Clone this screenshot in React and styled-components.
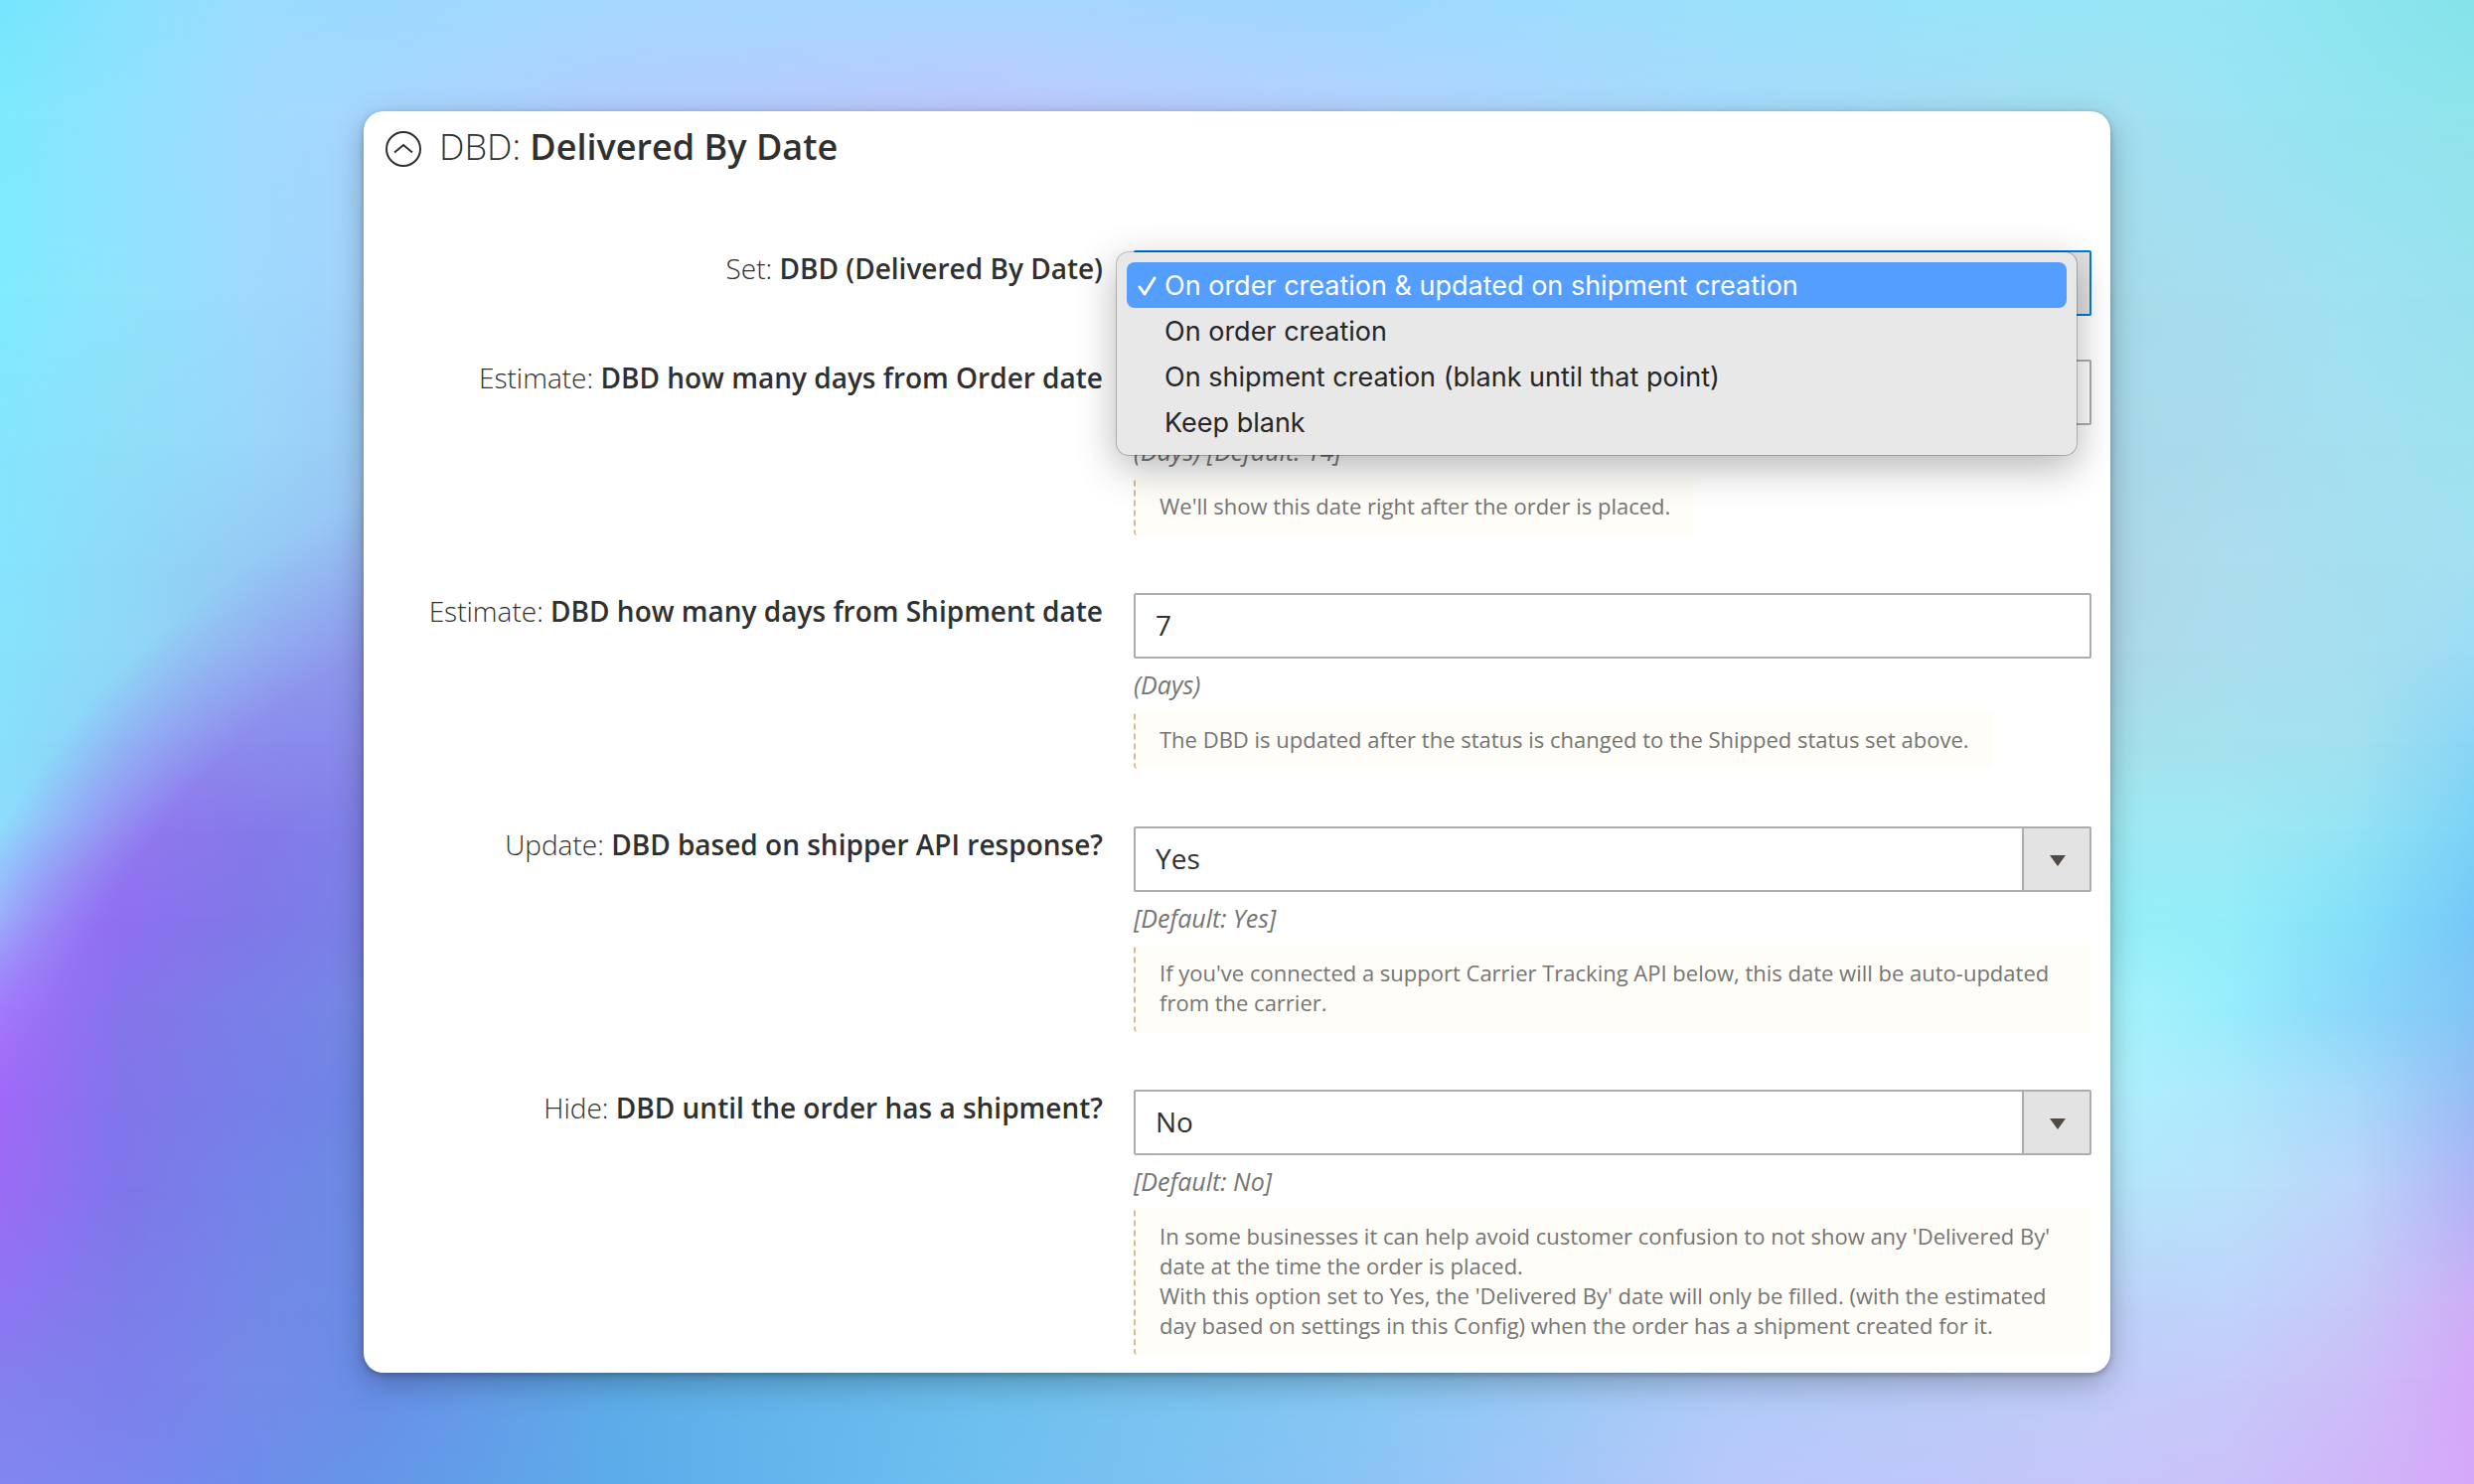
import React from "react";
import styled, { createGlobalStyle, css } from "styled-components";

const GlobalStyle = createGlobalStyle`
  *, *::before, *::after { box-sizing: border-box; }
  body {
    margin: 0;
    font-family: "Open Sans", "Noto Sans", sans-serif;
    color: #303030;
  }
`;

/* Colour meshes behind the card: each row is a horizontal gradient that fades
   in over the row above it, so neighbouring stops blend in both directions. */
const parseRows = (rows) => rows.map(([at, colours]) => ({ at, colours: colours.split(" ") }));

const skyColumns = [0, 5, 10, 15, 25, 40, 55, 70, 85, 90, 95, 100];
const skyRows = parseRows([
  [0, "75e6fd 8ae3ff 9bdcff 9cdafe a6d8ff a8d6ff 9fd8ff 9be1fb 98e6f8 95e6f6 8de5f0 84e4ea"],
  [8, "7eeafd 90e2fd a0dafd a8d7ff b2cdff bfc8fd b4d2ff a6dafc a4dff0 9be3f4 93e4f0 90e5ea"],
  [20, "80ebfd 90e3fc 9edafd a4d2fb b2cdff bfc8fd b4d2ff a6dafc a7dbea a6ddee 9fe2f2 99e1ee"],
  [30, "84e6fd 90dff9 99d7fa 9bcaf5 9bcaf5 9bcaf5 a9d8ea a9d8ea a9d8ea a8dbec a4e0f0 9fe2ee"],
  [38, "85e5fd 8fd9f7 94cbf5 98c0f3 98c0f3 98c0f3 aed6e8 aed6e8 aed6e8 adddee a6dfee a2e1f2"],
  [44, "86e3fb 90d7f7 94c6f2 93b8f0 93b8f0 93b8f0 add8ea add8ea add8ea abddee a6dfee 9cdcf5"],
  [50, "88e0fb 8fd0f7 94c4f2 94b6f0 94b6f0 94b6f0 a6e0ec a6e0ec a6e0ec a5e1ee a3e1ee 8ad6f6"],
  [56, "8edcfd 8fccf7 94c0f2 94b6f0 94b6f0 94b6f0 9eeaf4 9eeaf4 9eeaf4 9eeaf4 94e4f5 7bd3f5"],
  [62, "96c8fc 8e90f0 7f78e8 7a82e6 7a82e6 7a82e6 96eef8 96eef8 96eef8 94eefa 84e0f8 76c8f8"],
  [68, "a088fb 8574ea 7a7fe8 7389e5 7389e5 7389e5 a8f4fb a8f4fb a8f4fb 98edfc 8bd8fa 82c6f6"],
  [74, "a069f8 8175ea 767fe8 6d87e4 6d87e4 6d87e4 b0f0fd b0f0fd b0f0fd aee8fc a8dafa 98bdf4"],
  [80, "9b6cf5 7f76ea 7484e8 6b8ce4 6b8ce4 6b8ce4 b4e6fb b4e6fb b4e6fb b8e2fb bcd6fa b0b4f5"],
  [88, "8e76f2 7d7dea 7488e8 6a8ee6 5eade8 6dc0ee 86c8f4 a8ccf8 bcd2f8 bfd4fb c6c8f8 cfaef6"],
  [93, "8480ee 7d80ec 758ae8 6a8ee8 5eade8 6dc0ee 86c8f4 b0ccf8 c2ccf9 c5cafa ccbff8 d5a8f8"],
  [100, "8286f0 7a86ee 6e8ceb 6596e6 5cacea 6fc0f0 8ac4f5 b8c8fa c6c6fa cac2fa cfb6f8 d6a8f8"],
]);

const duskColumns = [0, 5, 10, 15, 25, 40, 55, 70];
const duskRows = parseRows([
  [38, "9fa0f6 94a0f2 94a4f0 8f9fec 8f9fec 8f9fec 8f9fec 8f9fec"],
  [44, "9fa0f6 9496f2 909cee 8c98ec 8c98ec 8c98ec 8c98ec 8c98ec"],
  [50, "a488f8 9488f0 8c8cec 888aea 888aea 888aea 888aea 888aea"],
  [56, "a480f8 9478f0 8579ea 7f82e8 7f82e8 7f82e8 7f82e8 7f82e8"],
  [62, "a475fa 8e70f0 7f78e8 7a82e6 7a82e6 7a82e6 7a82e6 7a82e6"],
  [68, "a46ffa 8574ea 7a7fe8 7389e5 7389e5 7389e5 7389e5 7389e5"],
  [74, "a069f8 8175ea 767fe8 6d87e4 6d87e4 6d87e4 6d87e4 6d87e4"],
  [80, "9b6cf5 7f76ea 7484e8 6b8ce4 6b8ce4 6b8ce4 6b8ce4 6b8ce4"],
  [88, "8e76f2 7d7dea 7488e8 6a8ee6 5eade8 6dc0ee 86c8f4 a8ccf8"],
  [93, "8480ee 7d80ec 758ae8 6a8ee8 5eade8 6dc0ee 86c8f4 b0ccf8"],
  [100, "8286f0 7a86ee 6e8ceb 6596e6 5cacea 6fc0f0 8ac4f5 b8c8fa"],
]);

const Page = styled.div`
  display: grid;
  min-height: 100vh;
`;

const MeshLayer = styled.div`
  grid-area: 1 / 1;
  display: grid;
  ${({ $mask }) =>
    $mask &&
    css`
      mask-image: ${$mask};
    `}
`;

const MeshRow = styled.div`
  grid-area: 1 / 1;
  background: linear-gradient(
    to right,
    ${({ $colours, $columns }) => $colours.map((c, i) => `#${c} ${$columns[i]}%`).join(", ")}
  );
  ${({ $from, $to }) =>
    $to > $from &&
    css`
      mask-image: linear-gradient(to bottom, transparent ${$from}%, #000 ${$to}%);
    `}
`;

const Content = styled.main`
  grid-area: 1 / 1;
  z-index: 1;
  padding: 112px 32px;
`;

const Card = styled.section`
  max-width: 1758px;
  margin: 0 auto;
  padding: 12px 19px 18px 21px;
  background: #fff;
  border-radius: 20px;
  box-shadow: 0 10px 32px rgba(0, 0, 0, 0.26), 0 2px 6px rgba(0, 0, 0, 0.24);
`;

const SectionHeader = styled.h2`
  margin: 0 0 80px;
  font-size: 36px;
  line-height: 48px;
  font-weight: 300;
`;

const SectionToggle = styled.button`
  display: flex;
  align-items: center;
  gap: 17px;
  padding: 0;
  border: 0;
  background: none;
  color: inherit;
  font: inherit;
  text-align: left;
  cursor: pointer;
`;

const ToggleIcon = styled.svg`
  flex: none;
  width: 38px;
  height: 38px;
  margin-top: 4px;
  fill: none;
  stroke: #303030;
  stroke-width: 2;
`;

const Strong = styled.span`
  font-weight: 600;
`;

const Fields = styled.div`
  display: grid;
`;

const Field = styled.div`
  display: grid;
  grid-template-columns: 3fr 4fr;
  column-gap: 31px;
  margin-bottom: ${({ $gap }) => $gap}px;
`;

const Label = styled.label`
  font-size: 28px;
  line-height: 36px;
  font-weight: 300;
  text-align: right;
`;

const Control = styled.div`
  position: relative;
`;

const boxStyle = css`
  display: block;
  width: 100%;
  height: 66px;
  margin: 0;
  padding: 0 20px 2px;
  border: 2px solid ${({ $active }) => ($active ? "#007bdb" : "#adadad")};
  border-radius: 2px;
  outline: 0;
  background: #fff;
  color: #303030;
  font-family: inherit;
  font-size: 28px;
  line-height: 38px;
`;

const TextInput = styled.input`
  ${boxStyle}
`;

const SelectBox = styled.select`
  ${boxStyle}
  appearance: none;
  padding-right: 90px;
  background: linear-gradient(to right, #adadad 2px, #e3e3e3 2px) right / 68px 100% no-repeat #fff;
`;

const SelectArrow = styled.svg`
  position: absolute;
  top: 29px;
  right: 26px;
  width: 16px;
  height: 11px;
  fill: #514943;
  pointer-events: none;
`;

const Hint = styled.p`
  margin: 9px 0 10px;
  font-size: 25px;
  line-height: 34px;
  font-style: italic;
  color: #757575;
`;

const Note = styled.p`
  width: fit-content;
  margin: 0;
  padding: 13px 24px 15px;
  border-left: 2px dashed #d6bf86;
  border-radius: 4px;
  background: #fffdf7;
  font-size: 22px;
  line-height: 30px;
  color: #757575;
`;

const Menu = styled.ul`
  position: absolute;
  z-index: 2;
  top: 2px;
  left: -17px;
  right: 15px;
  margin: 0;
  padding: 10px;
  list-style: none;
  border-radius: 12px;
  background: #e8e8e8;
  box-shadow: 0 0 0 1px rgba(0, 0, 0, 0.22), 0 12px 40px rgba(0, 0, 0, 0.3);
  font-family: Inter, sans-serif;
`;

const MenuItem = styled.li`
  display: grid;
  grid-template-columns: 19px 1fr;
  column-gap: 8px;
  align-items: center;
  height: 46px;
  padding: 2px 11px 0;
  border-radius: 8px;
  background: ${({ $selected }) => ($selected ? "#549eff" : "transparent")};
  color: ${({ $selected }) => ($selected ? "#fff" : "#262626")};
  font-size: 27px;
  line-height: 44px;
`;

const MenuText = styled.span`
  grid-column: 2;
`;

const Check = styled.svg`
  width: 19px;
  height: 20px;
  fill: none;
  stroke: currentColor;
  stroke-width: 3;
  stroke-linecap: round;
  stroke-linejoin: round;
`;

const timingOptions = [
  "On order creation & updated on shipment creation",
  "On order creation",
  "On shipment creation (blank until that point)",
  "Keep blank",
];

function Mesh({ columns, rows, mask }) {
  return (
    <MeshLayer $mask={mask} aria-hidden="true">
      {rows.map((row, i) => (
        <MeshRow
          key={row.at}
          $columns={columns}
          $colours={row.colours}
          $from={i ? rows[i - 1].at : row.at}
          $to={row.at}
        />
      ))}
    </MeshLayer>
  );
}

function FieldLabel({ id, prefix, children }) {
  return (
    <Label htmlFor={id}>
      {prefix}: <Strong>{children}</Strong>
    </Label>
  );
}

function Select({ id, options, value, active }) {
  return (
    <>
      <SelectBox id={id} defaultValue={value} $active={active}>
        {options.map((option) => (
          <option key={option}>{option}</option>
        ))}
      </SelectBox>
      <SelectArrow viewBox="0 0 16 11" aria-hidden="true">
        <path d="M0 0h16L8 11z" />
      </SelectArrow>
    </>
  );
}

export default function App() {
  return (
    <Page>
      <GlobalStyle />
      <Mesh columns={skyColumns} rows={skyRows} />
      <Mesh
        columns={duskColumns}
        rows={duskRows}
        mask="radial-gradient(30% 50% at 28% 83%, #000 90%, transparent 108%)"
      />
      <Content>
        <Card>
          <SectionHeader>
            <SectionToggle type="button" aria-expanded="true">
              <ToggleIcon viewBox="0 0 38 38" aria-hidden="true">
                <circle cx="19" cy="19" r="17" />
                <path d="M10 22.500l9-7.500 9 7.500" />
              </ToggleIcon>
              <span>
                DBD: <Strong>Delivered By Date</Strong>
              </span>
            </SectionToggle>
          </SectionHeader>
          <Fields>
            <Field $gap={44}>
              <FieldLabel id="set" prefix="Set">DBD (Delivered By Date)</FieldLabel>
              <Control>
                <Select id="set" options={timingOptions} value={timingOptions[0]} active />
                <Menu role="listbox" aria-label="DBD (Delivered By Date)">
                  {timingOptions.map((option, i) => (
                    <MenuItem key={option} role="option" aria-selected={i === 0} $selected={i === 0}>
                      {i === 0 && (
                        <Check viewBox="0 0 19 20" aria-hidden="true">
                          <path d="M2 11l5 7L17 2" />
                        </Check>
                      )}
                      <MenuText>{option}</MenuText>
                    </MenuItem>
                  ))}
                </Menu>
              </Control>
            </Field>
            <Field $gap={58}>
              <FieldLabel id="order-days" prefix="Estimate">DBD how many days from Order date</FieldLabel>
              <Control>
                <TextInput id="order-days" type="text" />
                <Hint>(Days) [Default: 14]</Hint>
                <Note>We'll show this date right after the order is placed.</Note>
              </Control>
            </Field>
            <Field $gap={58}>
              <FieldLabel id="shipment-days" prefix="Estimate">DBD how many days from Shipment date</FieldLabel>
              <Control>
                <TextInput id="shipment-days" type="text" defaultValue="7" />
                <Hint>(Days)</Hint>
                <Note>The DBD is updated after the status is changed to the Shipped status set above.</Note>
              </Control>
            </Field>
            <Field $gap={58}>
              <FieldLabel id="update" prefix="Update">DBD based on shipper API response?</FieldLabel>
              <Control>
                <Select id="update" options={["Yes", "No"]} value="Yes" />
                <Hint>[Default: Yes]</Hint>
                <Note>
                  If you've connected a support Carrier Tracking API below, this date will be auto-updated
                  from the carrier.
                </Note>
              </Control>
            </Field>
            <Field $gap={0}>
              <FieldLabel id="hide" prefix="Hide">DBD until the order has a shipment?</FieldLabel>
              <Control>
                <Select id="hide" options={["Yes", "No"]} value="No" />
                <Hint>[Default: No]</Hint>
                <Note>
                  In some businesses it can help avoid customer confusion to not show any 'Delivered By'
                  date at the time the order is placed.
                  <br />
                  With this option set to Yes, the 'Delivered By' date will only be filled. (with the
                  estimated day based on settings in this Config) when the order has a shipment created
                  for it.
                </Note>
              </Control>
            </Field>
          </Fields>
        </Card>
      </Content>
    </Page>
  );
}
